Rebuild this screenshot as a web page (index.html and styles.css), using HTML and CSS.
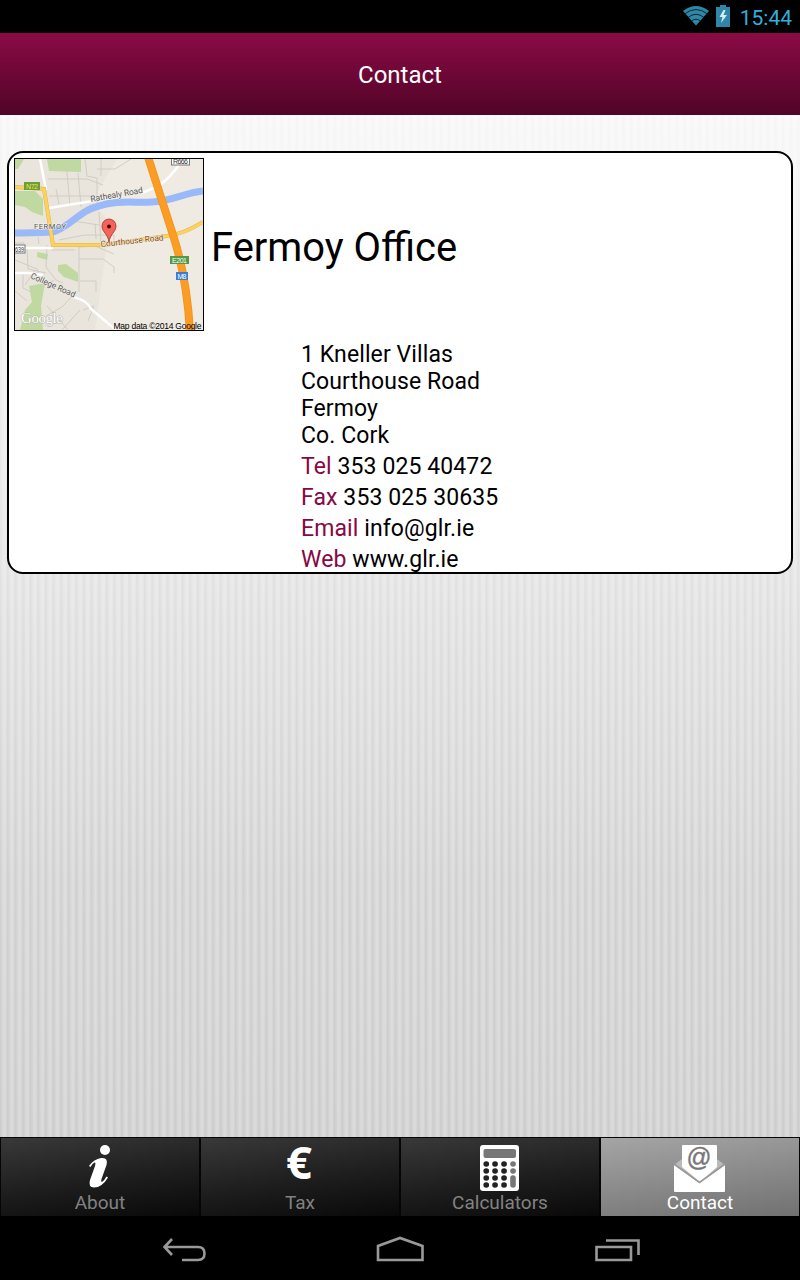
FILE: index.html
```html
<!DOCTYPE html>
<html lang="en">
<head>
  <meta charset="UTF-8">
  <meta name="viewport" content="width=device-width, initial-scale=1.0">
  <title>Contact</title>
  <link rel="stylesheet" href="styles.css">
</head>
<body>
  <div class="status">
    <svg class="wifi" width="28" height="21" viewBox="0 0 28 21">
      <path d="M1 6Q14-4 27 6L14 20.500Z" fill="#2f86a6"/>
      <path d="M2.500 9Q14 0 25.500 9M6 12.500Q14 6 22 12.500M9.500 16Q14 12.500 18.500 16" fill="none" stroke="#0c2631" stroke-width="1"/>
    </svg>
    <svg class="battery" width="14" height="22" viewBox="0 0 14 22">
      <path d="M4 0h6v2h4v20H0V2h4z" fill="#2f86a6"/>
      <path d="M7.500 5L3.500 12h3L5 18l6-8H7.500L9.500 5z" fill="#d5edf6"/>
    </svg>
    <span class="clock">15:44</span>
  </div>

  <header class="header"><h1>Contact</h1></header>

  <main class="content">
    <section class="card">
      <div class="office">
        <svg class="map" width="188" height="171" viewBox="0 0 188 171">
          <rect width="188" height="171" fill="#efebe2"/>
          <path d="M0 0H102L77 42L98 68L92 85L80 171H0Z" fill="#e9e5dc"/>
          <g fill="#bfd9a0">
            <path d="M32 0H66V13L34 12ZM0 32L20 32L28 40V57L17 53L10 48L0 46ZM0 0H9L3 10H0ZM43 106L51 105L63 114V123L49 118L43 112ZM22 93L33 95L32 101L22 98ZM14 127L30 124L26 147L28 171H5L10 151L17 143Z"/>
          </g>
          <g fill="none" stroke="#cfcabf" stroke-width=".9">
            <path d="M33 20H72L88 26M51 3L55 47M63 14L66 48M70 0L72 17L82 19V48M34 37H78M41 30L44 45M82 10H100M86 0V17M44 81L70 76H99V86M58 62L84 66M84 53L86 83M64 86V133M64 100H88L99 108V114M65 122H81V133M0 101L22 110L25 122M12 89L13 110L31 114M32 86L31 108L41 121L48 124M36 91H60M8 115V129L18 134M0 132L12 142M20 111L10 126M60 134L47 148L31 157M68 151L79 147L73 162M47 171L65 151M80 65L81 80M32 147L53 171M100 10L116 0M0 84H9M24 85L23 78M39 121L28 128M64 88L80 87L99 95"/>
          </g>
          <path d="M0 74Q14 74 38 73C55 68 65 51 84 47C101 41 118 44 137 43C157 42 169 34 188 32" fill="none" stroke="#99b9f9" stroke-width="7"/>
          <g fill="none" stroke="#fff" stroke-width="2.500">
            <path d="M25 0L31 31M34 49L78 42M126 34C142 29 151 24 164 6M9 89H38M0 114H14L28 116M58 138Q72 141 76 150L101 171"/>
          </g>
          <path d="M0 28L29 30L38 86H88L152 77Q169 75 188 63" fill="none" stroke="#dcb451" stroke-width="4"/>
          <path d="M0 28L29 30L38 86H88L152 77Q169 75 188 63" fill="none" stroke="#fcd15c" stroke-width="3.200"/>
          <path d="M133 -2L158 76Q172 119 175 173" fill="none" stroke="#f0921c" stroke-width="8"/>
          <path d="M133 -2L158 76Q172 119 175 173" fill="none" stroke="#fb9d24" stroke-width="6.500"/>
          <g class="road">
            <text x="76" y="43" textLength="53" lengthAdjust="spacingAndGlyphs" transform="rotate(-10 76 43)">Rathealy Road</text>
            <text x="15" y="119" textLength="48" lengthAdjust="spacingAndGlyphs" transform="rotate(24 15 119)">College Road</text>
            <text class="court" x="86" y="88" textLength="63" lengthAdjust="spacingAndGlyphs" transform="rotate(-6 86 88)">Courthouse Road</text>
            <text class="town" x="19" y="70" textLength="32">FERMOY</text>
          </g>
          <g class="shield">
            <rect x="9" y="23" width="16" height="8" fill="#6c9e37"/><text class="n72" x="11" y="30" textLength="12">N72</text>
            <rect x="155" y="97" width="19" height="8" fill="#549745"/><text x="157" y="104" textLength="15">E201</text>
            <rect x="161" y="113" width="12" height="8" fill="#3d7cd0"/><text x="162.500" y="120" textLength="9">M8</text>
            <rect x="156.500" y="-3" width="18" height="9" fill="#fff" stroke="#777"/><text class="local" x="158" y="5" textLength="15">R666</text>
            <rect x="-6" y="86" width="16" height="8" fill="#fff" stroke="#777"/><text class="local" x="0" y="92.500" textLength="9" lengthAdjust="spacingAndGlyphs">639</text>
          </g>
          <path d="M94 83C93 75 87 73 87 67A7 7 0 0 1 101 67C101 73 95 75 94 83Z" fill="#f5645b" stroke="#a52e27" stroke-width=".8"/>
          <circle cx="94" cy="67.500" r="2" fill="#430905"/>
          <text class="google" x="6" y="163.500" textLength="42">Google</text>
          <text class="copy" x="98.500" y="169.500" textLength="88">Map data ©2014 Google</text>
        </svg>
        <h2>Fermoy Office</h2>
      </div>
      <div class="address">
        <p>1 Kneller Villas</p>
        <p>Courthouse Road</p>
        <p>Fermoy</p>
        <p>Co. Cork</p>
        <div class="lines">
          <p><span class="label">Tel</span> 353 025 40472</p>
          <p><span class="label">Fax</span> 353 025 30635</p>
          <p><span class="label">Email</span> info@glr.ie</p>
          <p><span class="label">Web</span> www.glr.ie</p>
        </div>
      </div>
    </section>
  </main>

  <nav class="tabs">
    <a class="tab">
      <svg width="54" height="50" viewBox="0 0 54 50" fill="#fff">
        <circle cx="32" cy="9" r="5"/>
        <path d="M16 25Q21 18 28 17Q35.500 16 33.500 24L28.500 38Q27.500 42 29.500 40.500Q31.500 39 33.500 35.500L35 36.500Q29 46.500 21 46.500Q15 46.500 17 39L22 25Q23 21 21.500 21.500Q19.500 22 17.500 26Z"/>
      </svg>
      <span>About</span>
    </a>
    <a class="tab">
      <svg width="54" height="50" viewBox="0 0 54 50">
        <text class="euro" x="13" y="38" textLength="26" lengthAdjust="spacingAndGlyphs">€</text>
      </svg>
      <span>Tax</span>
    </a>
    <a class="tab">
      <svg width="54" height="50" viewBox="0 0 54 50">
        <rect x="7" y="4" width="39" height="46" rx="3" fill="#fff"/>
        <rect x="10.500" y="8" width="32.500" height="9" rx="2" fill="#777"/>
        <g fill="none" stroke="#222" stroke-width="5.600" stroke-linecap="round">
          <path d="M13.200 23h.1M22 23h.1M31 23h.1M13.200 30h.1M22 30h.1M31 30h.1M13.200 37h.1M22 37h.1M31 37h.1M13.200 44h.1M22 44h.1M31 44h.1"/>
        </g>
        <path d="M40 23h.1M40 30h.1M40 37V44" stroke="#777" stroke-width="5.600" stroke-linecap="round"/>
      </svg>
      <span>Calculators</span>
    </a>
    <a class="tab active">
      <svg width="54" height="50" viewBox="0 0 54 50">
        <path d="M1 24L9 18H44L52 24L27 43Z" fill="#bbb"/>
        <path d="M9 5q0-1 1-1H43q1 0 1 1V26L27 41L9 26Z" fill="#fff"/>
        <path d="M1 24L26.500 42L52 24V50q0 1-1 1H2q-1 0-1-1Z" fill="#fff"/>
        <path d="M1 23L26.500 41.500L52 23" fill="none" stroke="#999" stroke-width="1.600"/>
        <text class="at" x="13.500" y="25" textLength="25" lengthAdjust="spacingAndGlyphs">@</text>
      </svg>
      <span>Contact</span>
    </a>
  </nav>

  <div class="navbar">
    <svg width="800" height="64" viewBox="0 0 800 64" fill="none" stroke="#999" stroke-width="2.600">
      <path d="M172 23L164.500 31L172 39M165 31H198Q204.500 31 204.500 37.500T198 44H182"/>
      <path d="M378 44V30L400 22L422.500 30V44Z"/>
      <path d="M596.500 31H631V44H596.500ZM606 24.500H638.500V39"/>
    </svg>
  </div>
</body>
</html>
```
FILE: styles.css
```css
* {
  box-sizing: border-box;
}
body {
  margin: 0;
  height: 1280px;
  display: flex;
  flex-direction: column;
  font-family: Roboto, sans-serif;
  color: #000;
  background: #000;
  overflow: hidden;
}
h1, h2, p {
  margin: 0;
  font-weight: 400;
}
.status {
  height: 33px;
  display: flex;
  justify-content: flex-end;
  align-items: center;
  padding-right: 8px;
}
.wifi {
  margin-bottom: 2px;
}
.battery {
  margin: 0 10px 1px 6px;
}
.clock {
  color: #35afdc;
  font-size: 21px;
  line-height: 33px;
  padding-top: 3px;
}
.header {
  height: 82px;
  background: linear-gradient(#8b0b45, #500427);
  text-align: center;
}
.header h1 {
  color: #fff;
  font-size: 24px;
  line-height: 85px;
}
.content {
  flex: 1;
  padding: 36px 7px 0;
  background:
    linear-gradient(rgba(250, 250, 250, .75), rgba(250, 250, 250, 0) 75%),
    repeating-linear-gradient(90deg, rgba(0, 0, 0, .055) 0, rgba(0, 0, 0, .02) 2px, rgba(255, 255, 255, .12) 4px, rgba(0, 0, 0, 0) 6px, rgba(0, 0, 0, .055) 7.6px),
    linear-gradient(#f6f6f6, #e0e0e0 50%, #d7d7d7);
}
.card {
  height: 423px;
  padding: 5px;
  background: #fff;
  border: 2px solid #000;
  border-radius: 16px;
}
.office {
  display: flex;
  align-items: center;
}
.map {
  box-sizing: content-box;
  border: 1px solid #000;
}
.office h2 {
  margin-left: 7px;
  padding-top: 5px;
  font-size: 39.9px;
}
.address {
  padding: 10px 0 0 287px;
  font-size: 23px;
  line-height: 27px;
  letter-spacing: .1px;
}
.lines {
  padding-top: 2px;
  line-height: 31px;
}
.label {
  color: #870842;
}

/* map labels */
.road text {
  font-size: 8.5px;
  fill: #555;
  stroke: #f4f1eb;
  stroke-width: 1px;
  paint-order: stroke;
}
.road .court {
  fill: #854c12;
}
.road .town {
  font-size: 7.5px;
}
.shield text {
  font: 7px "Liberation Sans", sans-serif;
  fill: #fff;
}
.shield .n72 {
  fill: #f2e548;
}
.shield .local {
  fill: #333;
}
.google {
  font: 15px "Liberation Serif", serif;
  fill: #fff;
  stroke: #b5b2ac;
  stroke-width: 1px;
  paint-order: stroke;
}
.copy {
  font: 8.5px "Liberation Sans", sans-serif;
}

/* bottom tabs */
.tabs {
  height: 79px;
  display: grid;
  grid-template-columns: repeat(4, 1fr);
}
.tab {
  display: flex;
  flex-direction: column;
  align-items: center;
  padding-top: 3px;
  color: #828282;
  font-size: 19px;
  line-height: 20px;
  background: linear-gradient(172deg, #393939, #1d1d1d 55%, #090909);
  border: 1px solid #050505;
  border-bottom: 0;
}
.tab svg {
  display: block;
  overflow: visible;
}
.tab span {
  margin-top: 2px;
}
.tab.active {
  color: #fff;
  background: linear-gradient(172deg, #a5a5a5, #717171);
}
.euro {
  font: bold 45px "Noto Sans", sans-serif;
  fill: #fff;
}
.at {
  font: 25px "Liberation Sans", sans-serif;
  fill: #777;
  stroke: #777;
  stroke-width: .4px;
}
.navbar {
  height: 64px;
}
.navbar svg {
  display: block;
}
```
